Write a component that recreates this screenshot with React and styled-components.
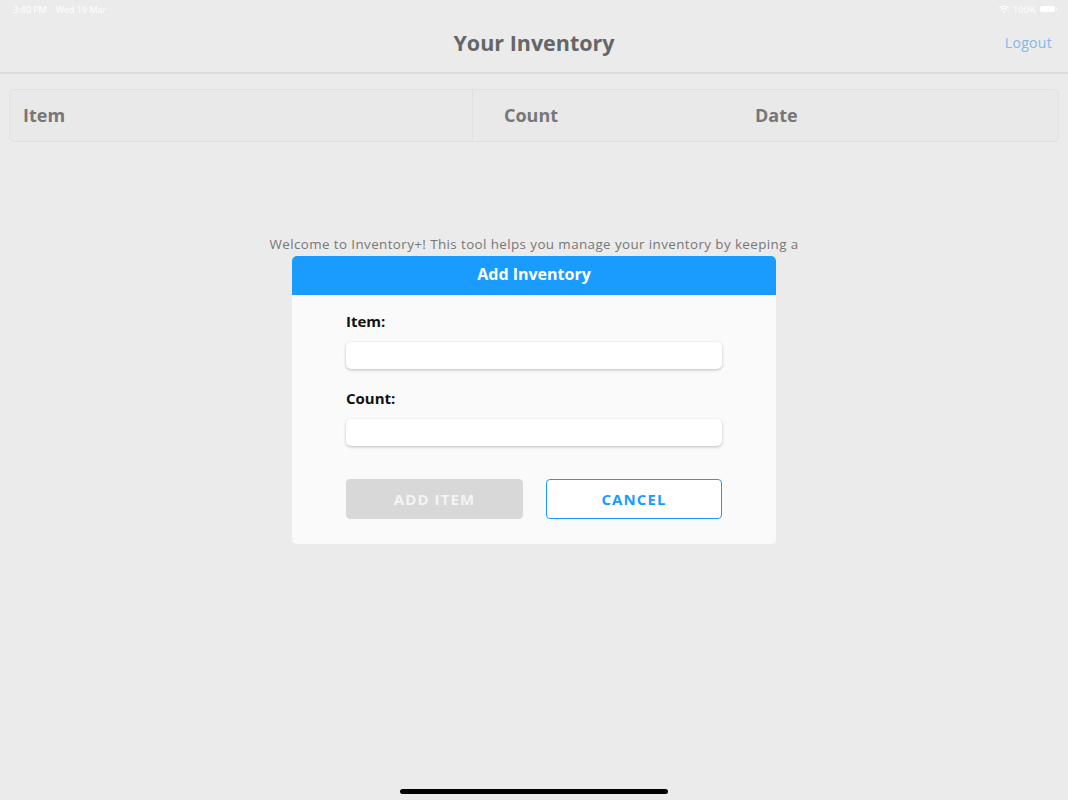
import React from "react";
import styled, { createGlobalStyle } from "styled-components";

const GlobalStyle = createGlobalStyle`
  body {
    margin: 0;
    background: #ebebeb;
    font-family: "Open Sans", "Liberation Sans", sans-serif;
  }
`;

const Screen = styled.div`
  position: relative;
  width: 1068px;
  height: 800px;
  overflow: hidden;
  display: flex;
  flex-direction: column;
  background: #ebebeb;
`;

const StatusBar = styled.div`
  height: 18px;
  display: flex;
  align-items: center;
  justify-content: space-between;
  padding: 0 13px;
  font-size: 9px;
  color: #ffffff;
`;

const StatusLeft = styled.div`
  display: flex;
  gap: 9px;
`;

const StatusRight = styled.div`
  display: flex;
  align-items: center;
  gap: 4px;
`;

const Battery = styled.div`
  width: 15px;
  height: 6px;
  border-radius: 2px;
  background: #ffffff;
  position: relative;
  &::after {
    content: "";
    position: absolute;
    right: -2px;
    top: 2px;
    width: 1px;
    height: 2px;
    background: #ffffff;
  }
`;

const Header = styled.div`
  box-sizing: border-box;
  height: 56px;
  display: grid;
  grid-template-columns: 1fr auto 1fr;
  align-items: center;
  padding: 0 16px 5px;
  border-bottom: 2px solid #dcdcdc;
`;

const Title = styled.h1`
  grid-column: 2;
  margin: 0;
  font-size: 21.5px;
  font-weight: 700;
  color: #666666;
`;

const Logout = styled.a`
  justify-self: end;
  font-size: 14px;
  color: #82b9ec;
  letter-spacing: 0.3px;
`;

const TableHead = styled.div`
  margin: 15px 9px 0;
  height: 51px;
  display: grid;
  grid-template-columns: 462px 252px 1fr;
  border: 1px solid #e0e0e0;
  border-radius: 5px;
  background: #e9e9e9;
`;

const HeadCell = styled.div`
  display: flex;
  align-items: center;
  padding-left: ${(p) => p.$pad}px;
  padding-bottom: 2px;
  border-left: ${(p) => (p.$divider ? "1px solid #e0e0e0" : "none")};
  font-size: 18px;
  font-weight: 700;
  color: #777777;
`;

const Welcome = styled.p`
  margin: 93px 0 0;
  text-align: center;
  white-space: nowrap;
  font-size: 13.4px;
  letter-spacing: 0.4px;
  line-height: 19px;
  color: #777777;
`;

const Modal = styled.div`
  position: absolute;
  left: 292px;
  top: 256px;
  width: 484px;
  border-radius: 5px;
  background: #fafafa;
  overflow: hidden;
`;

const ModalTitle = styled.div`
  box-sizing: border-box;
  height: 39px;
  padding-bottom: 3px;
  display: flex;
  align-items: center;
  justify-content: center;
  background: #199cfe;
  color: #ffffff;
  font-size: 16px;
  font-weight: 700;
`;

const ModalBody = styled.div`
  padding: 17px 54px 25px;
  display: flex;
  flex-direction: column;
`;

const Label = styled.label`
  font-size: 15px;
  font-weight: 700;
  color: #111111;
  margin-top: ${(p) => p.$top}px;
  line-height: 19px;
`;

const Input = styled.input`
  margin-top: 11px;
  height: 27px;
  box-sizing: border-box;
  border: none;
  border-radius: 5px;
  background: #ffffff;
  box-shadow: 0 1px 3px rgba(0, 0, 0, 0.25);
  outline: none;
`;

const Buttons = styled.div`
  margin-top: 33px;
  display: grid;
  grid-template-columns: 177px 176px;
  justify-content: space-between;
`;

const Button = styled.button`
  height: 40px;
  box-sizing: border-box;
  border-radius: 4px;
  font-family: inherit;
  font-size: 15px;
  font-weight: 700;
  letter-spacing: 1.1px;
  border: 1px solid ${(p) => (p.$outline ? "#199cfe" : "#d8d8d8")};
  background: ${(p) => (p.$outline ? "#ffffff" : "#d8d8d8")};
  color: ${(p) => (p.$outline ? "#199cfe" : "#f4f4f4")};
`;

const HomeIndicator = styled.div`
  position: absolute;
  left: 400px;
  bottom: 6px;
  width: 268px;
  height: 5px;
  border-radius: 3px;
  background: #000000;
`;

function Wifi() {
  return (
    <svg width="10" height="8" viewBox="0 0 10 8">
      <path d="M0.5 3 A6.5 6.5 0 0 1 9.5 3" stroke="#fff" strokeWidth="1.2" fill="none" />
      <path d="M2.2 4.7 A4 4 0 0 1 7.8 4.7" stroke="#fff" strokeWidth="1.2" fill="none" />
      <circle cx="5" cy="6.8" r="1" fill="#fff" />
    </svg>
  );
}

export default function App() {
  return (
    <Screen>
      <GlobalStyle />
      <StatusBar>
        <StatusLeft>
          <span>3:40 PM</span>
          <span>Wed 19 Mar</span>
        </StatusLeft>
        <StatusRight>
          <Wifi />
          <span>100%</span>
          <Battery />
        </StatusRight>
      </StatusBar>
      <Header>
        <Title>Your Inventory</Title>
        <Logout>Logout</Logout>
      </Header>
      <TableHead>
        <HeadCell $pad={13}>Item</HeadCell>
        <HeadCell $pad={31} $divider>Count</HeadCell>
        <HeadCell $pad={31}>Date</HeadCell>
      </TableHead>
      <Welcome>
        Welcome to Inventory+! This tool helps you manage your inventory by keeping a
      </Welcome>
      <Modal>
        <ModalTitle>Add Inventory</ModalTitle>
        <ModalBody>
          <Label $top={0}>Item:</Label>
          <Input />
          <Label $top={20}>Count:</Label>
          <Input />
          <Buttons>
            <Button>ADD ITEM</Button>
            <Button $outline>CANCEL</Button>
          </Buttons>
        </ModalBody>
      </Modal>
      <HomeIndicator />
    </Screen>
  );
}
